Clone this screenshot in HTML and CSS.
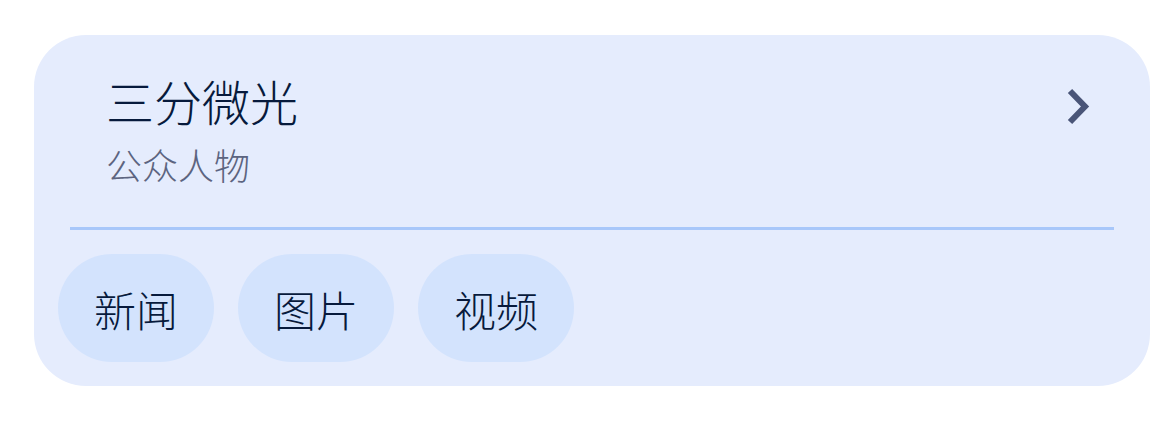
FILE: index.html
```html
<!DOCTYPE html>
<html lang="zh">
<head>
<meta charset="utf-8">
<link rel="stylesheet" href="styles.css">
</head>
<body>
<div class="card">
  <div class="header">
    <div class="texts">
      <div class="title">三分微光</div>
      <div class="subtitle">公众人物</div>
    </div>
    <svg class="chev" width="30" height="42" viewBox="0 0 30 42"><path d="M6 5 L21 20.5 L6 36" fill="none" stroke="#4a5578" stroke-width="6" stroke-linecap="butt" stroke-linejoin="miter"/></svg>
  </div>
  <div class="divider"></div>
  <div class="chips">
    <div class="chip">新闻</div>
    <div class="chip">图片</div>
    <div class="chip">视频</div>
  </div>
</div>
</body>
</html>
```
FILE: styles.css
```css
html, body { margin: 0; padding: 0; background: #ffffff; }
body { font-family: "Noto Sans CJK SC", "Noto Sans", sans-serif; }
.card {
  margin: 35px 0 0 34px;
  width: 1116px;
  height: 351px;
  box-sizing: border-box;
  background: #e5ecfd;
  border-radius: 52px;
  display: flex;
  flex-direction: column;
}
.header {
  display: flex;
  justify-content: space-between;
  align-items: flex-start;
  padding: 34px 56px 0 72px;
  height: 192px;
  box-sizing: border-box;
}
.title { font-size: 48px; line-height: 62px; color: #071a3c; font-weight: 300; }
.subtitle { font-size: 36px; line-height: 44px; color: #5c6480; margin-top: 11px; font-weight: 300; }
.chev { margin-top: 17px; }
.divider { height: 3px; background: #a8c7fa; margin: 0 36px; }
.chips { display: flex; gap: 24px; padding: 24px 24px 0 24px; }
.chip {
  height: 108px; padding: 0 36px;
  display: flex; align-items: center;
  background: #d3e3fd; border-radius: 54px;
  font-size: 42px; color: #071a3c; font-weight: 300;
}
```
